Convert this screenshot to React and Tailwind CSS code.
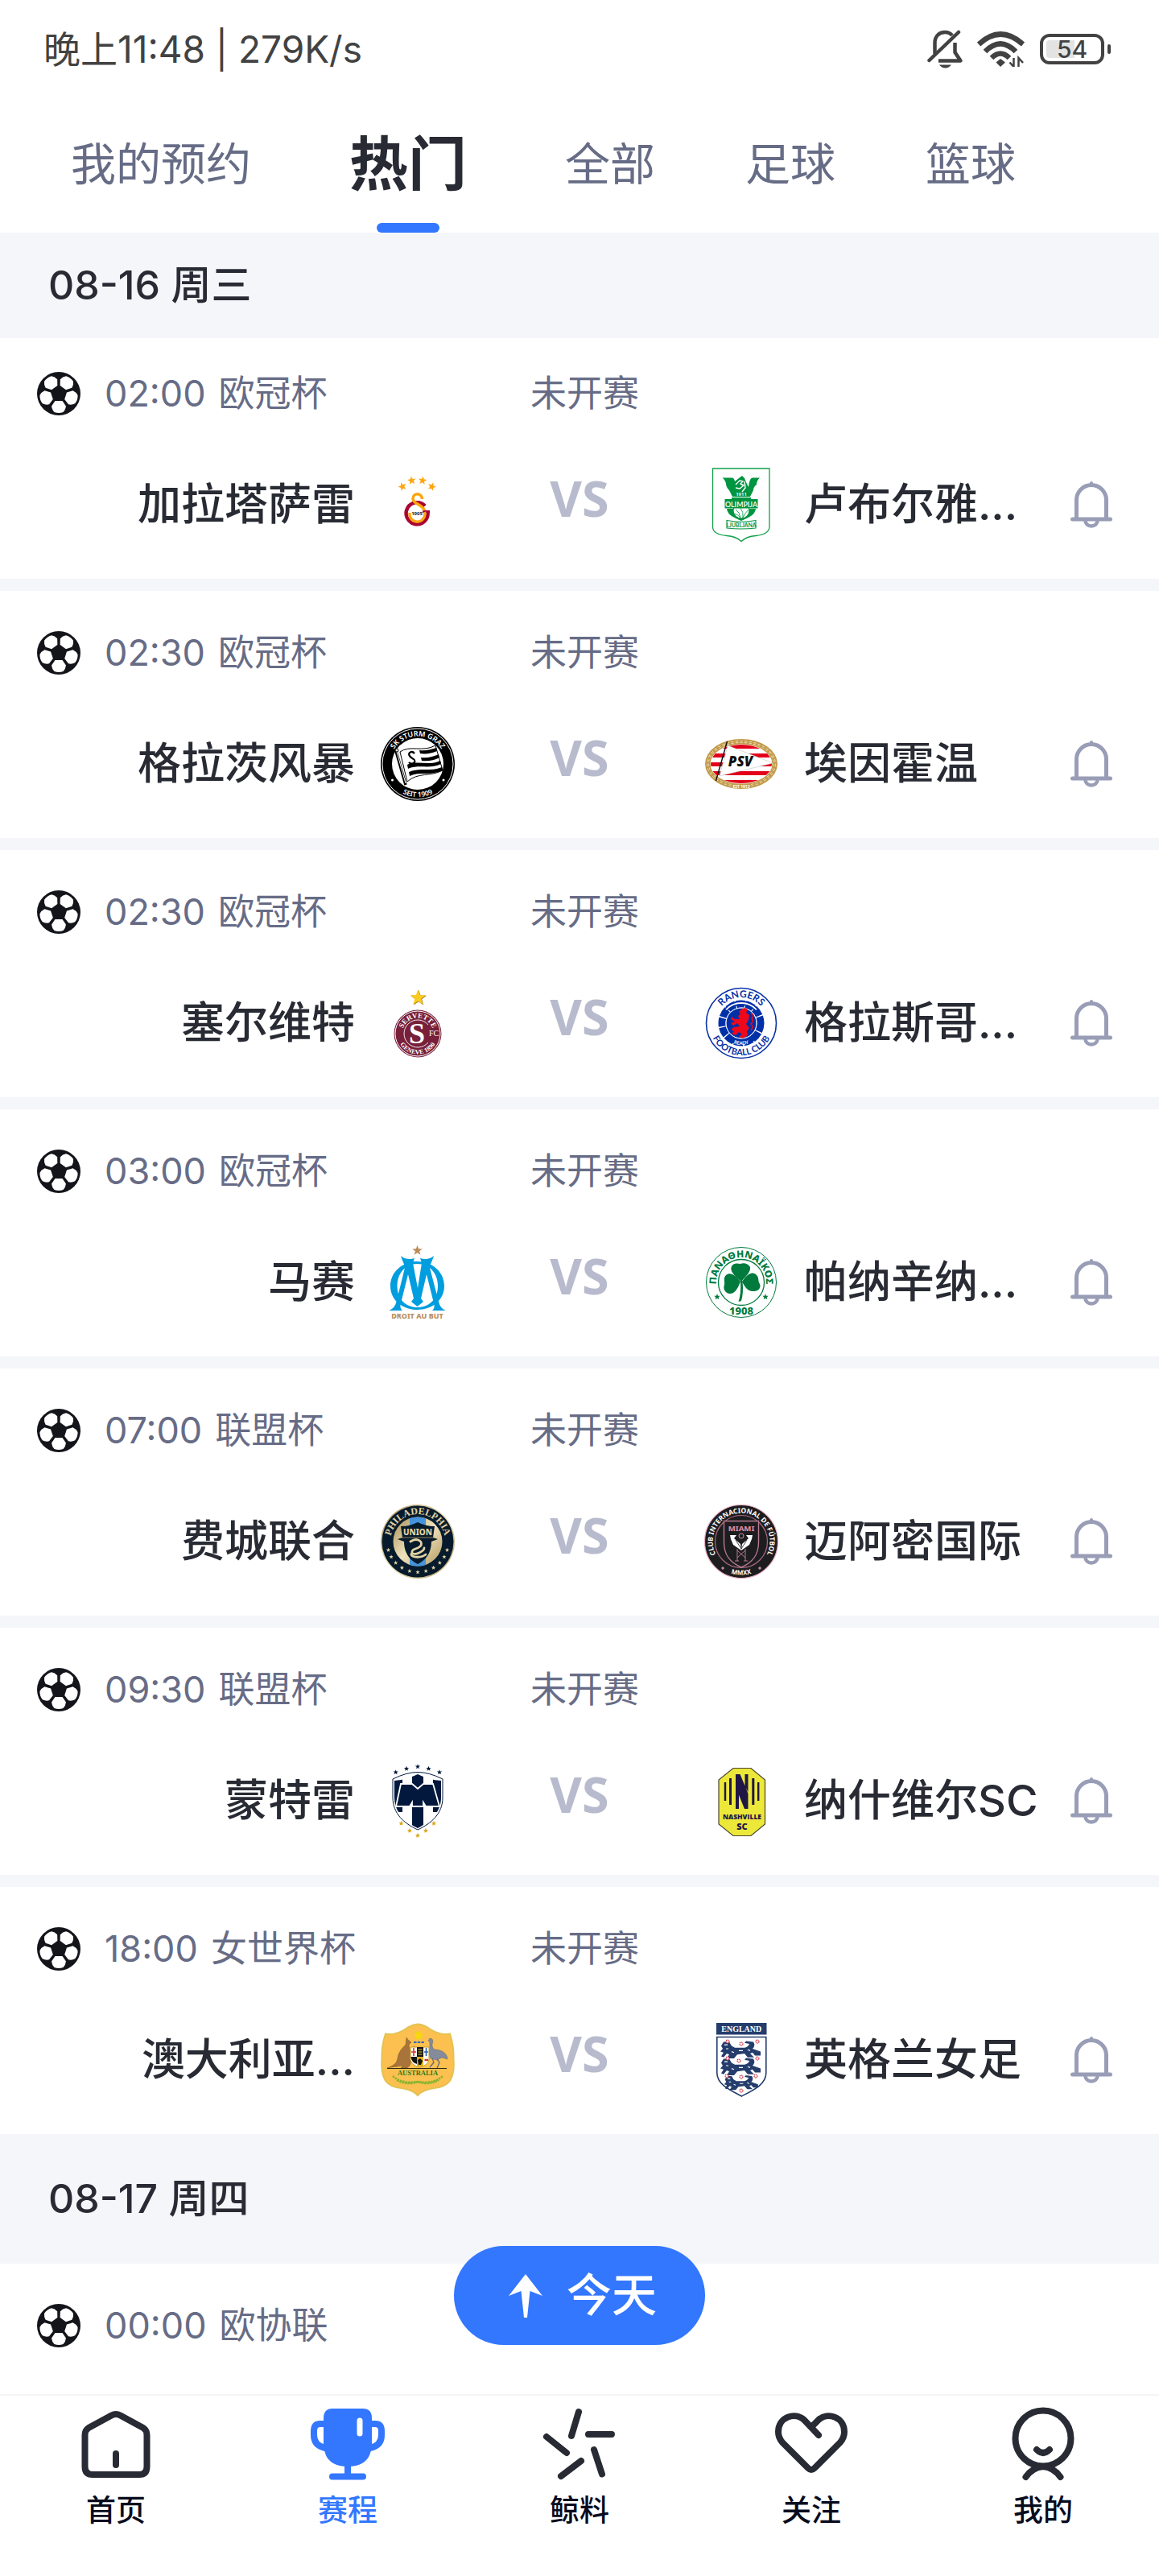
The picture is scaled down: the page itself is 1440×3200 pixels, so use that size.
import React from "react";

const NAVY = "#071b2c";

function Star({ x, y, r, fill, rotate = 0 }) {
  const pts = [];
  for (let i = 0; i < 10; i++) {
    const a = (Math.PI / 5) * i - Math.PI / 2 + (rotate * Math.PI) / 180;
    const d = i % 2 ? r * 0.42 : r;
    pts.push(`${(x + d * Math.cos(a)).toFixed(2)},${(y + d * Math.sin(a)).toFixed(2)}`);
  }
  return <polygon points={pts.join(" ")} fill={fill} />;
}

/* Text that runs along a circle: "top" reads clockwise, "bottom" counter-clockwise. */
function ArcText({ id, r, side = "top", cx = 46, cy = 46, size, fill, font = "Noto Sans", weight = 700, children }) {
  const d =
    side === "top"
      ? `M${cx} ${cy + r}A${r} ${r} 0 0 1 ${cx} ${cy - r}A${r} ${r} 0 0 1 ${cx} ${cy + r}`
      : `M${cx} ${cy - r}A${r} ${r} 0 0 0 ${cx} ${cy + r}A${r} ${r} 0 0 0 ${cx} ${cy - r}`;
  return (
    <>
      <path id={id} d={d} fill="none" />
      <text fontSize={size} fill={fill} fontFamily={font} fontWeight={weight} textAnchor="middle">
        <textPath href={`#${id}`} startOffset="50%">
          {children}
        </textPath>
      </text>
    </>
  );
}

function Crest({ label, children }) {
  return (
    <svg viewBox="0 0 92 92" className="size-[92px] shrink-0 overflow-visible" role="img" aria-label={label}>
      {children}
    </svg>
  );
}

const Galatasaray = () => (
  <Crest label="加拉塔萨雷">
    <Star x={27} y={23.5} r={5.5} fill="#fda50f" rotate={-20} />
    <Star x={38.5} y={16} r={5.5} fill="#fda50f" rotate={-8} />
    <Star x={52} y={16} r={5.5} fill="#fda50f" rotate={8} />
    <Star x={63.5} y={23.5} r={5.5} fill="#fda50f" rotate={20} />
    <path d="M55 47.500A13.500 13.500 0 1 0 58.500 55" fill="none" stroke="#a90432" strokeWidth="4.500" />
    <path d="M52 53H61V56H52Z" fill="#a90432" />
    <path d="M51.500 39C51 30.500 40 31 40 38.500C40 45 51 45 54.500 53" fill="none" stroke="#fda50f" strokeWidth="3.600" />
    <path d="M54.500 55A9.500 9.500 0 1 1 36 56" fill="none" stroke="#fda50f" strokeWidth="3.400" />
    <circle cx="45" cy="56" r="7" fill="#fff" />
    <text x="45" y="59" textAnchor="middle" fontSize="6" fontWeight="700" fontFamily="Noto Sans" fill="#222">1905</text>
  </Crest>
);

const SturmGraz = () => (
  <Crest label="格拉茨风暴">
    <circle cx="46" cy="46" r="46" fill="#000" />
    <circle cx="46" cy="46" r="44" fill="none" stroke="#fff" strokeWidth="1" />
    <circle cx="46" cy="46" r="32" fill="#fff" />
    <ArcText id="sg-t" r={34.500} size={9} fill="#fff" weight={600}>SK STURM GRAZ</ArcText>
    <ArcText id="sg-b" r={41} side="bottom" size={8.500} fill="#fff" weight={600}>SEIT 1909</ArcText>
    <circle cx="14.500" cy="66" r="1.500" fill="#fff" />
    <circle cx="78" cy="66" r="1.500" fill="#fff" />
    <path d="M19 30L31 72" stroke="#000" strokeWidth="3.500" />
    <path d="M20 31L31 70" stroke="#fff" strokeWidth="1" />
    <path d="M24 31C36 22 52 32 68 23L77 54C62 62 46 56 33 68Z" fill="#fff" stroke="#000" strokeWidth="1" />
    <path d="M48 29C56 30 62 28 69 26L70 30C63 33 56 34 49 33Z" />
    <path d="M50 38C58 39 65 37 72 34L73 38C66 42 58 43 51 42Z" />
    <path d="M33 47C46 41 60 49 74 42L75 46C61 53 47 46 34 52Z" />
    <path d="M35 56C48 50 62 56 76 50L77 54C62 61 48 55 36 61Z" />
    <path d="M42 33C39 29 33 32 36 36C38 40 44 39 42 44C40 46 37 46 35 44" fill="none" stroke="#000" strokeWidth="2.200" />
    <circle cx="20" cy="29" r="2" fill="#fff" stroke="#000" />
  </Crest>
);

const Servette = () => (
  <Crest label="塞尔维特">
    <Star x={47} y={15} r={10.500} fill="#a87a14" />
    <Star x={46.300} y={14.500} r={10} fill="#fbcb22" />
    <circle cx="46" cy="59" r="29.500" fill="#78203a" />
    <circle cx="46" cy="59" r="28" fill="none" stroke="#fff" strokeWidth="1" />
    <path d="M59 48A17 17 0 1 0 59 70" fill="none" stroke="#fff" strokeWidth="0.900" />
    <ArcText id="sv-t" r={19.500} cy={59} size={9} fill="#fff" font="Liberation Serif">SERVETTE</ArcText>
    <ArcText id="sv-b" r={25.500} cy={59} side="bottom" size={8} fill="#fff" font="Liberation Serif">GENEVE 1890</ArcText>
    <text x="45" y="71" textAnchor="middle" fontSize="36" fontWeight="700" fontFamily="Liberation Serif" fill="#fff">S</text>
    <text x="66" y="62" textAnchor="middle" fontSize="10" fontFamily="Liberation Serif" fill="#fff">FC</text>
  </Crest>
);

const Marseille = () => (
  <Crest label="马赛">
    <Star x={45.500} y={6.500} r={6.500} fill="#b98d5a" />
    <path fillRule="evenodd" fill="#009ddf" d="M45.500 20C64 20 79 33 79 50.500S64 80 45.500 80S12 68 12 50.500S27 20 45.500 20ZM45.500 23C31 23 20.500 34 20.500 50.500S31 77 45.500 77S71 67 71 50.500S60 23 45.500 23Z" />
    <path
      d="M25 13C29 17 36 18 42 16L40 22L46 53L51 22L49 16C55 18 62 17 66 13C64 20 61 24 61 28L72 70C73.500 76 76 79 81 81H64C67 78 67 76 66 72L57 36L50 66L53 70L45.500 76L38 70L41 66L34 36L25 72C24 76 24 78 27 81H10C15 79 18 76 19.500 70L30 28C30 24 27 20 25 13Z"
      fill="#009ddf"
    />
    <text x="45.500" y="91" textAnchor="middle" fontSize="9" fontWeight="800" fontFamily="Noto Sans" fill="#b98d5a">DROIT AU BUT</text>
  </Crest>
);

const Philadelphia = () => (
  <Crest label="费城联合">
    <defs>
      <linearGradient id="ph-gold" x1="0" x2="1" y1="0" y2="1">
        <stop offset="0" stopColor="#a88c54" />
        <stop offset="0.500" stopColor="#efe3bd" />
        <stop offset="1" stopColor="#b39860" />
      </linearGradient>
    </defs>
    <circle cx="46" cy="46" r="46" fill="url(#ph-gold)" />
    <circle cx="46" cy="46" r="44.500" fill={NAVY} />
    <circle cx="46" cy="46" r="30.500" fill="url(#ph-gold)" />
    <path d="M36 17Q46 14 56 17V75Q46 78 36 75Z" fill="#4593dc" />
    <ArcText id="ph-t" r={34} size={12} fill="#e2d3a4" font="Liberation Serif">PHILADELPHIA</ArcText>
    {[-74, -60, -46, -31, -15.500, 0, 15.500, 31, 46, 60, 74].map((a) => (
      <Star key={a} x={46 + 38 * Math.sin((a * Math.PI) / 180)} y={46 + 38 * Math.cos((a * Math.PI) / 180)} r={2.800} fill="#e2d3a4" />
    ))}
    <path d="M25 27Q36 27 46 22Q56 27 67 27L65 41L71 43L63 46C63 60 56 69 46 74C36 69 29 60 29 46L21 43L27 41Z" fill={NAVY} />
    <text x="46" y="37.500" textAnchor="middle" fontSize="10" fontWeight="800" fontFamily="Noto Sans" fill="#e2d3a4">UNION</text>
    <path d="M25 41H67" stroke="#b39860" strokeWidth="0.800" />
    <path d="M37 46C46 40 54 47 49 52C44 56 38 55 39 60C42 64 54 58 54 54M39 60C34 66 50 67 56 62" fill="none" stroke="#e2d3a4" strokeWidth="2.800" strokeLinecap="round" />
  </Crest>
);

const Monterrey = () => (
  <Crest label="蒙特雷">
    <defs>
      <clipPath id="mt-clip">
        <path d="M17 21Q32 20 46 13Q60 20 75 21V42C75 60 62 72 46 80C30 72 17 60 17 42Z" />
      </clipPath>
    </defs>
    {[[18.700, 10.600], [32, 6], [46, 3.500], [59.500, 6], [73, 10.600]].map(([x, y]) => (
      <Star key={x} x={x} y={y} r={3.300} fill="#02193d" />
    ))}
    {[[25.500, 74], [36, 83], [46, 89], [56, 83], [66, 74]].map(([x, y]) => (
      <Star key={x} x={x} y={y} r={3.300} fill="#d9a516" />
    ))}
    <path d="M15 19Q32 10.500 46 10.500Q60 10.500 77 19V42C77 62 63 74 46 82C29 74 15 62 15 42Z" fill="#fff" stroke="#02193d" strokeWidth="1" />
    <g clipPath="url(#mt-clip)" fill="#02193d">
      <path d="M15 8H27V60H15ZM39 8H53V84H39ZM65 8H77V60H65Z" />
    </g>
    <path d="M25 25H39L46 31L53 25H65L73 53H56L53 48V53H39V48L36 53H19Z" fill="#02193d" stroke="#fff" strokeWidth="1.800" />
  </Crest>
);

const Australia = () => (
  <Crest label="澳大利亚女足">
    <path d="M6 13.500Q18 15.500 30 8Q38 2 46 1.500Q54 2 62 8Q74 15.500 86 13.500Q91 28 90.500 45Q92 62 86 72Q80 80 66 81Q52 83 46 90Q40 83 26 81Q12 80 6 72Q0 62 1.500 45Q1 28 6 13.500Z" fill="#fcc050" stroke="#e2c352" strokeWidth="2" />
    <Star x={47} y={15.500} r={6} fill="#f5d90f" />
    <Star x={47} y={15.500} r={6} fill="#f5d90f" rotate={36} />
    <path d="M41 24H54" stroke="#2d6db3" strokeWidth="2" strokeDasharray="3.500 1.200" />
    <path d="M32 18L34 21L38 24L35 27L36 34L42 29L42 31L38 38L37 46C38 52 35 55 32 56H25L28 53C24 54 18 54 8 56C16 53 20 50 21 44C22 36 27 31 31 27Z" fill="#a8743a" stroke="#7d5227" strokeWidth="0.500" />
    <path d="M59 22L61 19L64 20L65 23C63 28 64 31 67 33C76 33 83 38 83 45L76 43L70 46L62 44C60 40 60 34 61 30L61 24Z" fill="#848b9a" stroke="#5d6474" strokeWidth="0.500" />
    <path d="M70 45L73 49L70 56M64 44L66 49L61 55" stroke="#666d7c" strokeWidth="1.400" fill="none" />
    <path d="M37 30H60V46Q58 53 48.500 55Q39 53 37 46Z" fill="#fff" stroke="#c69a1c" strokeWidth="1" />
    <path d="M45 30H53V42H45ZM37.500 42H45V51Q38 49 37.500 42Z" fill="#151515" />
    <path d="M45 42H53V54H45Z" fill="#e0b21d" />
    <path d="M41 31V41M38 36H44" stroke="#d8302e" strokeWidth="1.600" />
    <path d="M56.500 31V41M54 36H59" stroke="#245fb0" strokeWidth="1.600" />
    <path d="M46.500 33H51.500M46.500 36H51.500M46.500 39H51.500" stroke="#ecc42c" strokeWidth="1.200" />
    <path d="M46 46L49 44L52 47L50 52H47Z" fill="#151515" />
    <path d="M54.500 46H59" stroke="#d8302e" strokeWidth="2.500" />
    <path d="M8 56.500H82" stroke="#33290f" strokeWidth="1.200" />
    <text x="46" y="64.500" textAnchor="middle" fontSize="8.500" fontWeight="700" fontFamily="Liberation Serif" fill="#2b7a16">AUSTRALIA</text>
    <path d="M15 66Q26 76 46 73Q66 76 77 66M20 71Q32 78 46 73Q60 78 72 71" fill="none" stroke="#86b52f" strokeWidth="2.400" strokeDasharray="2.500 1" />
  </Crest>
);

const Olimpija = () => (
  <Crest label="卢布尔雅那">
    <path d="M10.500 1H81V74Q80 83 64 84.500Q52 85.500 46 91.500Q40 85.500 28 84.500Q11 83 10.500 74Z" fill="#fff" stroke="#12a04a" strokeWidth="1.300" />
    <path d="M22.500 12.500H34Q37 12 38 17L43 13L47 10L50 13L52 18L55 24Q56 12.500 60 12.500H69Q65 16 65 21Q61 24 61 28L57 36H35L31 28Q27 24 27 20Q26 15 22.500 12.500Z" fill="#009540" />
    <path d="M39 21L44 16L48 17L45 20L49 22L44 26L39 25M50 17L51 25L47 30" fill="none" stroke="#fff" strokeWidth="1.400" />
    <text x="46" y="34.500" textAnchor="middle" fontSize="6" fontWeight="600" fontFamily="Noto Sans" fill="#fff">1911</text>
    <path d="M34 37H58V40H34Z" fill="#009540" />
    <path d="M28 51H64C63 59 55 62 46 66C37 62 29 59 28 51Z" fill="#009540" />
    <circle cx="46" cy="53" r="10" fill="#fff" stroke="#009540" strokeWidth="1" />
    <path d="M39 52Q44 55 45 62M45 50Q49 55 48 62M55 52Q50 57 48 62M37 57Q42 58 45 62" fill="none" stroke="#009540" strokeWidth="0.800" />
    <path d="M25.500 39H66.500V50.500H25.500Z" fill="#009540" />
    <text x="46" y="48.500" textAnchor="middle" fontSize="8.800" fontWeight="600" fontFamily="Lato" fill="#fff">OLIMPIJA</text>
    <path d="M28 65.500Q46 69 64 65.500V75Q46 77 28 75Z" fill="#fff" stroke="#009540" strokeWidth="1.100" />
    <text x="46" y="73.800" textAnchor="middle" fontSize="6.800" fontWeight="700" fontFamily="Lato" fill="#009540">LJUBLJANA</text>
  </Crest>
);

const PSV = () => (
  <Crest label="埃因霍温">
    <defs>
      <clipPath id="psv-clip">
        <ellipse cx="46" cy="46" rx="38" ry="24" />
      </clipPath>
    </defs>
    <ellipse cx="46" cy="46" rx="45" ry="31" fill="#c39b4b" />
    <ellipse cx="46" cy="46" rx="41.500" ry="27.500" fill="none" stroke="#f3e7cc" strokeWidth="2.600" strokeDasharray="3.400 2.200" />
    <ellipse cx="46" cy="46" rx="41.500" ry="27.500" fill="none" stroke="#c39b4b" strokeWidth="1.200" />
    <ellipse cx="46" cy="46" rx="38.500" ry="24.500" fill="#fff" />
    <g clipPath="url(#psv-clip)" fill="#e3001b">
      <path d="M0 22H92V27H0ZM0 33H92V38H0ZM0 44H92V49H0ZM0 55H92V60H0ZM0 66H92V71H0Z" />
    </g>
    <path d="M29 23L85.500 45L19 61Z" fill="#fff" stroke="#bbb" strokeWidth="0.500" />
    <path d="M28.500 18L14.500 67" stroke="#111" strokeWidth="1.400" />
    <text x="45" y="49" textAnchor="middle" fontSize="17" fontWeight="900" fontStyle="italic" fontFamily="Open Sans" fill="#111">PSV</text>
    <path d="M35 71H58V75Q46 77 35 75Z" fill="#c39b4b" />
    <text x="46" y="75.500" textAnchor="middle" fontSize="5" fontWeight="700" fontFamily="Noto Sans" fill="#fff">EST 1913</text>
  </Crest>
);

const Rangers = () => (
  <Crest label="格拉斯哥流浪者">
    <circle cx="46" cy="46" r="43.500" fill="#fff" stroke="#0a33a6" strokeWidth="1.600" />
    <circle cx="46" cy="46" r="24" fill="none" stroke="#0030a8" strokeWidth="9" strokeDasharray="10.500 1.300" />
    <path d="M27 29A26 26 0 0 1 65 29" fill="none" stroke="#fff" strokeWidth="3" />
    <path d="M26 28A27 27 0 0 1 66 28M29 30A24 24 0 0 1 63 30" fill="none" stroke="#0030a8" strokeWidth="1.800" />
    <path d="M26 64A27 27 0 0 0 66 64L60 60A20 20 0 0 1 32 60Z" fill="#0030a8" />
    <circle cx="46" cy="46" r="19" fill="#0030a8" stroke="#fff" strokeWidth="1" />
    <path d="M47 28L51 27L54 29L52 33L56 36L55 42L52 47L56 52L53 56L54 61L48 65L43 63L47 60L43 57L39 61L34 59L37 56L33 54L37 51L44 50L41 46L36 49L33 46L38 44L33 41L34 38L38 41L44 41L42 37L45 35L43 32Z" fill="#f0081a" />
    <path d="M58 34Q63 36 59 40Q62 43 58 47Q62 50 58 55" fill="none" stroke="#f0081a" strokeWidth="1.500" />
    <ArcText id="rg-t" r={32} size={12} fill="#0a33a6" font="Lato">RANGERS</ArcText>
    <ArcText id="rg-b" r={40} side="bottom" size={11} fill="#0a33a6" font="Lato">FOOTBALL CLUB</ArcText>
    <ArcText id="rg-r" r={27} side="bottom" size={6} fill="#fff" font="Lato">READY</ArcText>
  </Crest>
);

const Panathinaikos = () => (
  <Crest label="帕纳辛纳科斯">
    <circle cx="46" cy="46" r="43.500" fill="#fff" stroke="#007a3d" strokeWidth="1" />
    <circle cx="46" cy="46" r="28.500" fill="none" stroke="#007a3d" strokeWidth="1.300" />
    <ArcText id="pn-t" r={31} size={12} fill="#007a3d" weight={800}>ΠΑΝΑΘΗΝΑΪΚΟΣ</ArcText>
    <path d="M46 45C38 38 31 32 34 26C37 21 42 23 45 23C49 21 55 23 57 27C58 33 52 38 46 45Z" fill="#007a3d" />
    <path d="M45 45C38 36 32 33 27 37C23 41 26 45 25 49C23 54 26 59 31 60C38 61 42 53 45 45Z" fill="#007a3d" />
    <path d="M47 45C53 36 59 32 64 36C69 40 66 44 69 48C71 53 67 57 62 57C54 58 50 51 47 45Z" fill="#007a3d" />
    <path d="M45 44H47.500Q49 60 46 69L42.500 70Q46 60 45 44Z" fill="#007a3d" />
    <Star x={16} y={64} r={4} fill="#007a3d" />
    <Star x={76} y={64} r={4} fill="#007a3d" />
    <text x="46" y="86" textAnchor="middle" fontSize="13" fontWeight="800" fontFamily="Noto Sans" fill="#007a3d">1908</text>
  </Crest>
);

const Miami = () => (
  <Crest label="迈阿密国际">
    <circle cx="46" cy="46" r="45.500" fill="#1d1d1f" stroke="#e8a9be" strokeWidth="1.200" />
    <circle cx="46" cy="46" r="32.500" fill="none" stroke="#a96a80" strokeWidth="1.200" />
    <ArcText id="mi-t" r={35.500} size={8.500} fill="#fff">CLUB INTERNACIONAL DE FÚTBOL</ArcText>
    <ArcText id="mi-b" r={41.500} side="bottom" size={8} fill="#fff">MMXX</ArcText>
    <path d="M23 77V81M21 79H25M69 77V81M67 79H71" stroke="#e8a9be" strokeWidth="1" />
    <path d="M24.500 20.500H67.500V47C67.500 63 60 72 46 78C32 72 24.500 63 24.500 47Z" fill="#1d1d1f" stroke="#b87a90" strokeWidth="1.400" />
    <text x="46" y="32.500" textAnchor="middle" fontSize="9.500" fontWeight="800" fontFamily="Noto Sans" fill="#d98aa5">MIAMI</text>
    <circle cx="46" cy="39" r="3" fill="none" stroke="#d98aa5" strokeWidth="1" />
    <path d="M32 38H40L37 42L45 49L46 57L36 50L33 43ZM60 38H52L55 42L47 49L46 57L56 50L59 43Z" fill="#fff" />
    <path d="M39 44L46 55L53 44" stroke="#1d1d1f" strokeWidth="0.800" fill="none" />
    <path d="M41 55V70M51 55V70M41 57L51 66M51 57L41 66M38 70H43M49 70H54" stroke="#b87a90" strokeWidth="1" />
  </Crest>
);

const Nashville = () => (
  <Crest label="纳什维尔SC">
    <path d="M36 5.500H58L75.500 20V75L58 89.500H36L18 75V20Z" fill="#ece83a" stroke="#4a4530" strokeWidth="1.200" />
    <path d="M24.800 23H27.200V46H24.800ZM31 18H34V51H31ZM59.300 18H62.300V51H59.300ZM66 23H68.400V46H66Z" fill="#1f1646" />
    <path d="M39 23L43 28V56H39ZM39 13H44.500L54.500 37V56H50L39 29ZM50.500 13H54.500V35L50.500 28Z" fill="#1f1646" />
    <text x="47" y="69" textAnchor="middle" fontSize="8.500" fontWeight="800" fontFamily="Open Sans" fill="#1f1646">NASHVILLE</text>
    <text x="47" y="81.500" textAnchor="middle" fontSize="11" fontWeight="800" fontFamily="Open Sans" fill="#1f1646">SC</text>
  </Crest>
);

function Lion({ y }) {
  return (
    <g transform={`translate(0 ${y}) scale(1 1.2)`}>
      <path
        d="M21 -3L24 -7L31 -7L34 -3L38 -1L50 -1Q55 -2 56 -5L50 -6L52 -8L61 -7Q64 -3 60 0L70 3V7H63L60 4L57 5L62 9L54 9L50 5L41 6L37 10H28L31 6L28 5L24 9L21 8L24 4L20 3L23 0Z"
        fill="#253d6c"
      />
      <path d="M25 -4H29M27 0H30M34 3L37 4M43 2H48M54 1L57 2" stroke="#fff" strokeWidth="1" />
    </g>
  );
}

const England = () => (
  <Crest label="英格兰女足">
    <path d="M15 0H77.500V14.500H15Z" fill="#253d6c" />
    <text x="46.300" y="10.500" textAnchor="middle" fontSize="10" fontWeight="700" fontFamily="Liberation Serif" fill="#fff">ENGLAND</text>
    <path d="M15.800 17.500H76.800V62C76.800 76 62 83 46.300 91C31 83 15.800 76 15.800 62Z" fill="#fff" stroke="#253d6c" strokeWidth="1.600" />
    <Lion y={32} />
    <Lion y={53} />
    <g transform="translate(8 11) scale(.84)">
      <Lion y={74} />
    </g>
    {[[29, 23], [46, 26], [66, 23], [29, 44], [43, 47], [66, 44], [28, 66], [46, 67], [64, 66], [46, 84]].map(([x, y]) => (
      <circle key={`${x}-${y}`} cx={x} cy={y} r="2" fill="#fff" stroke="#d5283b" strokeWidth="1.100" strokeDasharray="1.500 .6" />
    ))}
  </Crest>
);

function Ball() {
  return (
    <svg viewBox="0 0 54 54" className="size-[54px] shrink-0" aria-hidden="true">
      <circle cx="27" cy="27" r="27" fill="#14151a" />
      {[0, 72, 144, 216, 288].map((a) => (
        <path key={a} transform={`translate(27 27) rotate(${a})`} d="M-4.500 9L4.500 9L9 15.500Q8.500 20 5.500 23Q0 25 -5.500 23Q-8.500 20 -9 15.500Z" fill="#fff" />
      ))}
    </svg>
  );
}

function BellIcon() {
  return (
    <svg viewBox="0 0 52 58" className="h-[58px] w-[52px]" fill="none" stroke="#999db6" aria-hidden="true">
      <path d="M7.500 47V23A18.500 18.500 0 0 1 44.500 23V47" strokeWidth="5" />
      <path d="M2.500 47H49.500" strokeWidth="5" strokeLinecap="round" />
      <path d="M26 2V5" strokeWidth="4" strokeLinecap="round" />
      <path d="M18.500 49A7.500 6.500 0 0 0 33.500 49" strokeWidth="4.500" />
    </svg>
  );
}

function StatusIcons() {
  return (
    <div className="flex items-center">
      <svg viewBox="0 0 46 48" className="mr-4 h-12 w-[46px]" fill="none" stroke="#424242" strokeWidth="4.500" aria-label="静音">
        <path d="M9.500 30V16C9.500 8 15 3 22 3C26 3 29 4.500 31 7" />
        <path d="M34.500 16V28L41.500 38.500H14" strokeLinejoin="round" />
        <path d="M2.500 38L39 3" strokeLinecap="round" />
        <path d="M15 43.500H30Q27 47.500 22.500 47.500T15 43.500Z" fill="#424242" stroke="none" />
      </svg>
      <svg viewBox="0 0 59 44" className="mr-[19px] h-11 w-[59px]" fill="none" stroke="#424242" strokeWidth="6.500" aria-label="无线网络">
        <path d="M2 16Q29 -9 57 16" />
        <path d="M10 25Q29 6 48 25" />
        <path d="M18 33Q29 22 40 33" />
        <path d="M29 34L35 38.500L29 44L23.500 38.500Z" fill="#424242" stroke="none" />
        <path d="M45.500 33V44L40.500 38.500M51.500 44V33L57 39" strokeWidth="2.500" />
      </svg>
      <div className="flex items-center gap-1" role="img" aria-label="电量 54%">
        <div className="flex h-[38px] w-20 rounded-xl border-4 border-[#424242] p-1">
          <div className="flex w-full items-center justify-center rounded-[4px] bg-linear-to-r from-[#e3e3e3] from-54% to-transparent to-54% text-[30px] leading-[22px] font-medium">
            54
          </div>
        </div>
        <div className="h-3 w-1 rounded-full bg-[#424242]" />
      </div>
    </div>
  );
}

const TABS = ["我的预约", "热门", "全部", "足球", "篮球"];

const MATCHES = [
  { time: "02:00", league: "欧冠杯", home: "加拉塔萨雷", HomeCrest: Galatasaray, away: "卢布尔雅...", AwayCrest: Olimpija },
  { time: "02:30", league: "欧冠杯", home: "格拉茨风暴", HomeCrest: SturmGraz, away: "埃因霍温", AwayCrest: PSV },
  { time: "02:30", league: "欧冠杯", home: "塞尔维特", HomeCrest: Servette, away: "格拉斯哥...", AwayCrest: Rangers },
  { time: "03:00", league: "欧冠杯", home: "马赛", HomeCrest: Marseille, away: "帕纳辛纳...", AwayCrest: Panathinaikos },
  { time: "07:00", league: "联盟杯", home: "费城联合", HomeCrest: Philadelphia, away: "迈阿密国际", AwayCrest: Miami },
  { time: "09:30", league: "联盟杯", home: "蒙特雷", HomeCrest: Monterrey, away: "纳什维尔SC", AwayCrest: Nashville },
  { time: "18:00", league: "女世界杯", home: "澳大利亚...", HomeCrest: Australia, away: "英格兰女足", AwayCrest: England },
];

function MatchMeta({ time, league, status }) {
  return (
    <div className="grid grid-cols-[1fr_310px_1fr] items-center text-[45px] leading-[54px] text-[#676c86]">
      <div className="flex items-center pl-[46px] whitespace-nowrap">
        <Ball />
        <span className="ml-[30px]">{time}</span>
        <span className="ml-4">{league}</span>
      </div>
      <span className="pl-[94px] whitespace-nowrap">{status}</span>
    </div>
  );
}

function MatchRow({ match, first }) {
  const { HomeCrest, AwayCrest } = match;
  return (
    <li className={first ? "bg-white pt-[42px] pb-[46px]" : "bg-white pt-[50px] pb-[46px]"}>
      <MatchMeta time={match.time} league={match.league} status="未开赛" />
      <div className="mt-[65px] grid grid-cols-[1fr_310px_1fr] items-center text-[54px] leading-[60px] font-medium text-[#282b33]">
        <div className="flex items-center justify-end gap-8 whitespace-nowrap">
          <span>{match.home}</span>
          <HomeCrest />
        </div>
        <span className="pb-4 text-center font-['Noto_Sans',sans-serif] text-[61px] font-bold text-[#b8bbcd]">VS</span>
        <div className="flex items-center gap-8 pr-[58px] whitespace-nowrap">
          <AwayCrest />
          <span className="flex-1">{match.away}</span>
          <button type="button" aria-label={`预约 ${match.home} 对 ${match.away}`}>
            <BellIcon />
          </button>
        </div>
      </div>
    </li>
  );
}

const NAV = [
  {
    label: "首页",
    icon: (
      <>
        <path d="M9.500 37Q9.500 31 14 28L42.500 12.500Q48 9.500 53.500 12.500L82 28Q86.500 31 86.500 37V76Q86.500 86 77 86H19Q9.500 86 9.500 76Z" />
        <path d="M48 60V74" />
      </>
    ),
  },
  {
    label: "赛程",
    active: true,
    icon: (
      <>
        <path d="M20 23H14Q6 23 6 32V37Q6 50 20 53M76 23H82Q90 23 90 32V37Q90 50 76 53" />
        <path d="M29 4H67Q78 4 78 16V50Q76 76 48 76Q20 76 18 50V16Q18 4 29 4Z" fill="currentColor" stroke="none" />
        <path d="M48 72V88M29 88.500H67" />
        <path d="M63 19V35" stroke="#fff" strokeWidth="7" />
      </>
    ),
  },
  {
    label: "鲸料",
    icon: <path d="M47 8L38 38M7 39L32 59M25 88L50 69M59 36H88M66 55L76 85.500" />,
  },
  {
    label: "关注",
    icon: <path d="M57 37L39 18C28 8 7 14 7 33Q7 40 12 46L44 78Q48 82 52 78L84 46Q89 40 89 33C89 14 68 8 57 18L48 27" />,
  },
  {
    label: "我的",
    icon: (
      <>
        <circle cx="48" cy="41" r="34.500" />
        <path d="M40 55Q48 63 56 55M26.500 89Q35 77 48 76Q61 77 69.500 89" />
      </>
    ),
  },
];

export default function App() {
  return (
    <div className="flex min-h-screen flex-col bg-[#f4f6fa] font-['Inter','Noto_Sans_CJK_SC',sans-serif] text-[#282b33]">
      <header className="bg-white">
        <div className="flex items-center justify-between py-[33px] pr-[60px] pl-[54px] text-[46px] leading-[56px] text-[#424242]">
          <span>晚上11:48 | 279K/s</span>
          <StatusIcons />
        </div>
        <nav className="flex pl-8 whitespace-nowrap" aria-label="赛事分类">
          {TABS.map((tab) =>
            tab === "热门" ? (
              <button key={tab} type="button" aria-current="page" className="relative px-[66px] pt-[42px] pb-[45px] text-[73px] leading-[80px] font-bold">
                {tab}
                <span className="absolute bottom-0 left-1/2 h-3 w-[78px] -translate-x-1/2 rounded-md bg-[#3377ff]" />
              </button>
            ) : (
              <button key={tab} type="button" className="px-14 pt-[42px] pb-[45px] text-[56px] leading-[80px] text-[#676c86]">
                {tab}
              </button>
            )
          )}
        </nav>
      </header>

      <main className="flex-1">
        <h2 className="px-[60px] py-[33px] text-[50px] leading-[65px] font-medium">08-16 周三</h2>
        <ul className="flex flex-col gap-[15px]">
          {MATCHES.map((match, i) => (
            <MatchRow key={match.home} match={match} first={i === 0} />
          ))}
        </ul>
        <h2 className="px-[60px] py-12 text-[50px] leading-[65px] font-medium">08-17 周四</h2>
        <div className="bg-white pt-[50px] pb-[58px]">
          <MatchMeta time="00:00" league="欧协联" />
        </div>
      </main>

      <footer className="relative border-t-2 border-[#f5f5f7] bg-white">
        <button
          type="button"
          className="absolute bottom-full left-1/2 mb-[63px] flex -translate-x-1/2 items-center gap-[30px] rounded-full bg-[#3377ff] py-[29px] pr-[60px] pl-[68px] text-[56px] leading-[65px] font-medium whitespace-nowrap text-white"
        >
          <svg viewBox="0 0 42 54" className="h-[54px] w-[42px]" fill="#fff" aria-hidden="true">
            <path d="M21 0L42 27L26.500 21L23 54H19L15.500 21L0 27Z" />
          </svg>
          今天
        </button>
        <nav className="grid grid-cols-5 pt-3 pb-[59px]" aria-label="主导航">
          {NAV.map((item) => (
            <a key={item.label} href="#" className={item.active ? "flex flex-col items-center gap-[13px] text-[#3377ff]" : "flex flex-col items-center gap-[13px] text-[#282b33]"}>
              <svg viewBox="0 0 96 96" className="size-24" fill="none" stroke="currentColor" strokeWidth="8" strokeLinecap="round" strokeLinejoin="round" aria-hidden="true">
                {item.icon}
              </svg>
              <span className={item.active ? "text-[37px] leading-[44px] font-medium" : "text-[37px] leading-[44px] font-medium text-[#080c1e]"}>{item.label}</span>
            </a>
          ))}
        </nav>
      </footer>
    </div>
  );
}
